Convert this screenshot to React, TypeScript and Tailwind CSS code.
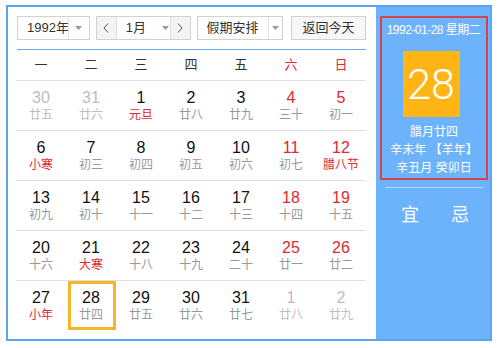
import React from "react";

type Cell = { n: string; l: string; other?: boolean; hol?: boolean; sel?: boolean };

const rows: Cell[][] = [
  [
    { n: "30", l: "廿五", other: true },
    { n: "31", l: "廿六", other: true },
    { n: "1", l: "元旦", hol: true },
    { n: "2", l: "廿八" },
    { n: "3", l: "廿九" },
    { n: "4", l: "三十" },
    { n: "5", l: "初一" },
  ],
  [
    { n: "6", l: "小寒", hol: true },
    { n: "7", l: "初三" },
    { n: "8", l: "初四" },
    { n: "9", l: "初五" },
    { n: "10", l: "初六" },
    { n: "11", l: "初七" },
    { n: "12", l: "腊八节", hol: true },
  ],
  [
    { n: "13", l: "初九" },
    { n: "14", l: "初十" },
    { n: "15", l: "十一" },
    { n: "16", l: "十二" },
    { n: "17", l: "十三" },
    { n: "18", l: "十四" },
    { n: "19", l: "十五" },
  ],
  [
    { n: "20", l: "十六" },
    { n: "21", l: "大寒", hol: true },
    { n: "22", l: "十八" },
    { n: "23", l: "十九" },
    { n: "24", l: "二十" },
    { n: "25", l: "廿一" },
    { n: "26", l: "廿二" },
  ],
  [
    { n: "27", l: "小年", hol: true },
    { n: "28", l: "廿四", sel: true },
    { n: "29", l: "廿五" },
    { n: "30", l: "廿六" },
    { n: "31", l: "廿七" },
    { n: "1", l: "廿八", other: true },
    { n: "2", l: "廿九", other: true },
  ],
];

const weekdays = ["一", "二", "三", "四", "五", "六", "日"];

function Arrow() {
  return (
    <svg width="7" height="4" viewBox="0 0 7 4">
      <polygon points="0,0 7,0 3.5,4" fill="#9a9a9a" />
    </svg>
  );
}

function Chevron({ dir }: { dir: "l" | "r" }) {
  return (
    <svg width="6" height="10" viewBox="0 0 6 10">
      <polyline
        points={dir === "l" ? "5,0.5 1,5 5,9.5" : "1,0.5 5,5 1,9.5"}
        fill="none"
        stroke="#555"
        strokeWidth="1"
      />
    </svg>
  );
}

export default function App() {
  const font = { fontFamily: '"Liberation Sans", "Noto Sans CJK SC", sans-serif' };
  return (
    <div className="w-[499px] h-[348px] bg-white text-[#333]" style={font}>
      <div className="ml-[6px] pt-[5px]">
        <div className="w-[486px] h-[336px] border-2 border-[#5aa4f2] flex">
          {/* left */}
          <div className="w-[368px] pl-[8px] pr-[10px] pt-[9px]">
            <div className="flex h-[24px] text-[13px] ml-px whitespace-nowrap">
              <div className="w-[73px] h-[24px] border border-[#d2d2d2] bg-white flex">
                <div className="w-[50px] pl-[9px] leading-[22px] whitespace-nowrap">1992年</div>
                <div className="flex-1 border-l border-[#e2e2e2] flex items-center justify-center">
                  <Arrow />
                </div>
              </div>
              <div className="ml-[6px] w-[95px] h-[24px] border border-[#d2d2d2] bg-white flex">
                <div className="w-[20px] bg-[#f3f3f3] border-r border-[#dedede] flex items-center justify-center">
                  <Chevron dir="l" />
                </div>
                <div className="w-[53px] flex items-center pl-[9px]">
                  <span className="leading-[22px] whitespace-nowrap">1月</span>
                  <span className="ml-[16px] flex items-center">
                    <Arrow />
                  </span>
                </div>
                <div className="flex-1 bg-[#f3f3f3] border-l border-[#dedede] flex items-center justify-center">
                  <Chevron dir="r" />
                </div>
              </div>
              <div className="ml-[6px] w-[87px] h-[24px] border border-[#d2d2d2] bg-white flex">
                <div className="w-[70px] pl-[9px] leading-[22px] whitespace-nowrap">假期安排</div>
                <div className="flex-1 border-l border-[#e2e2e2] flex items-center justify-center">
                  <Arrow />
                </div>
              </div>
              <div className="ml-[8px] w-[75px] h-[24px] border border-[#d2d2d2] bg-[#f7f7f7] flex items-center justify-center leading-[22px]">
                返回今天
              </div>
            </div>
            <div className="mt-[9px] h-px bg-[#6aaaf0] ml-px" />
            <div className="grid grid-cols-7 h-[31px] border-b border-[#e0e0e0] text-[13px] items-center text-center">
              {weekdays.map((w, i) => (
                <div key={w} className={i >= 5 ? "text-[#e0282e]" : "text-[#333]"}>
                  {w}
                </div>
              ))}
            </div>
            {rows.map((r, ri) => (
              <div
                key={ri}
                className={
                  "grid grid-cols-7 h-[50px] " + (ri < 4 ? "border-b border-[#e0e0e0]" : "")
                }
              >
                {r.map((c, ci) => {
                  const weekend = ci >= 5;
                  const numColor = c.other
                    ? "text-[#bdbdbd]"
                    : weekend
                    ? "text-[#e0282e]"
                    : "text-[#111]";
                  const lunarColor = c.other
                    ? "text-[#bdbdbd]"
                    : c.hol
                    ? "text-[#e0282e]"
                    : "text-[#999]";
                  return (
                    <div key={ci} className="relative flex flex-col items-center pt-[8px]">
                      {c.sel && (
                        <div className="absolute left-[2px] right-0 top-0 bottom-[1px] border-[3px] border-[#f6b52b]" />
                      )}
                      <div className={"text-[16px] leading-[18px] " + numColor}>{c.n}</div>
                      <div className={"text-[12px] leading-[16px] " + lunarColor}>{c.l}</div>
                    </div>
                  );
                })}
              </div>
            ))}
          </div>
          {/* right */}
          <div className="flex-1 bg-[#6db3fc] pl-[4px] pr-[2px] pt-[9px] text-white">
            <div className="h-[164px] border-2 border-[#d6434b] flex flex-col items-center pt-[4px]">
              <div className="text-[12px] leading-[16px] whitespace-nowrap tracking-[-0.5px] mr-[1px]">
                1992-01-28 星期二
              </div>
              <div
                className="mt-[13px] w-[57px] h-[66px] bg-[#ffb515] flex items-center justify-center text-[43px] font-light leading-none ml-[-6px]"
                style={{ fontFamily: 'Roboto, "Liberation Sans", sans-serif' }}
              >
                28
              </div>
              <div className="mt-[6px] text-[12px] leading-[18px]">腊月廿四</div>
              <div className="text-[12px] leading-[18px] whitespace-nowrap">辛未年 【羊年】</div>
              <div className="text-[12px] leading-[18px] whitespace-nowrap">辛丑月 癸卯日</div>
            </div>
            <div className="mt-[7px] mx-[5px] h-px bg-[#b5d7fd]" />
            <div className="mt-[17px] flex text-[18px] leading-[20px]">
              <div className="w-[50px] text-center ml-[5px]">宜</div>
              <div className="w-[50px] text-center">忌</div>
            </div>
          </div>
        </div>
      </div>
    </div>
  );
}
